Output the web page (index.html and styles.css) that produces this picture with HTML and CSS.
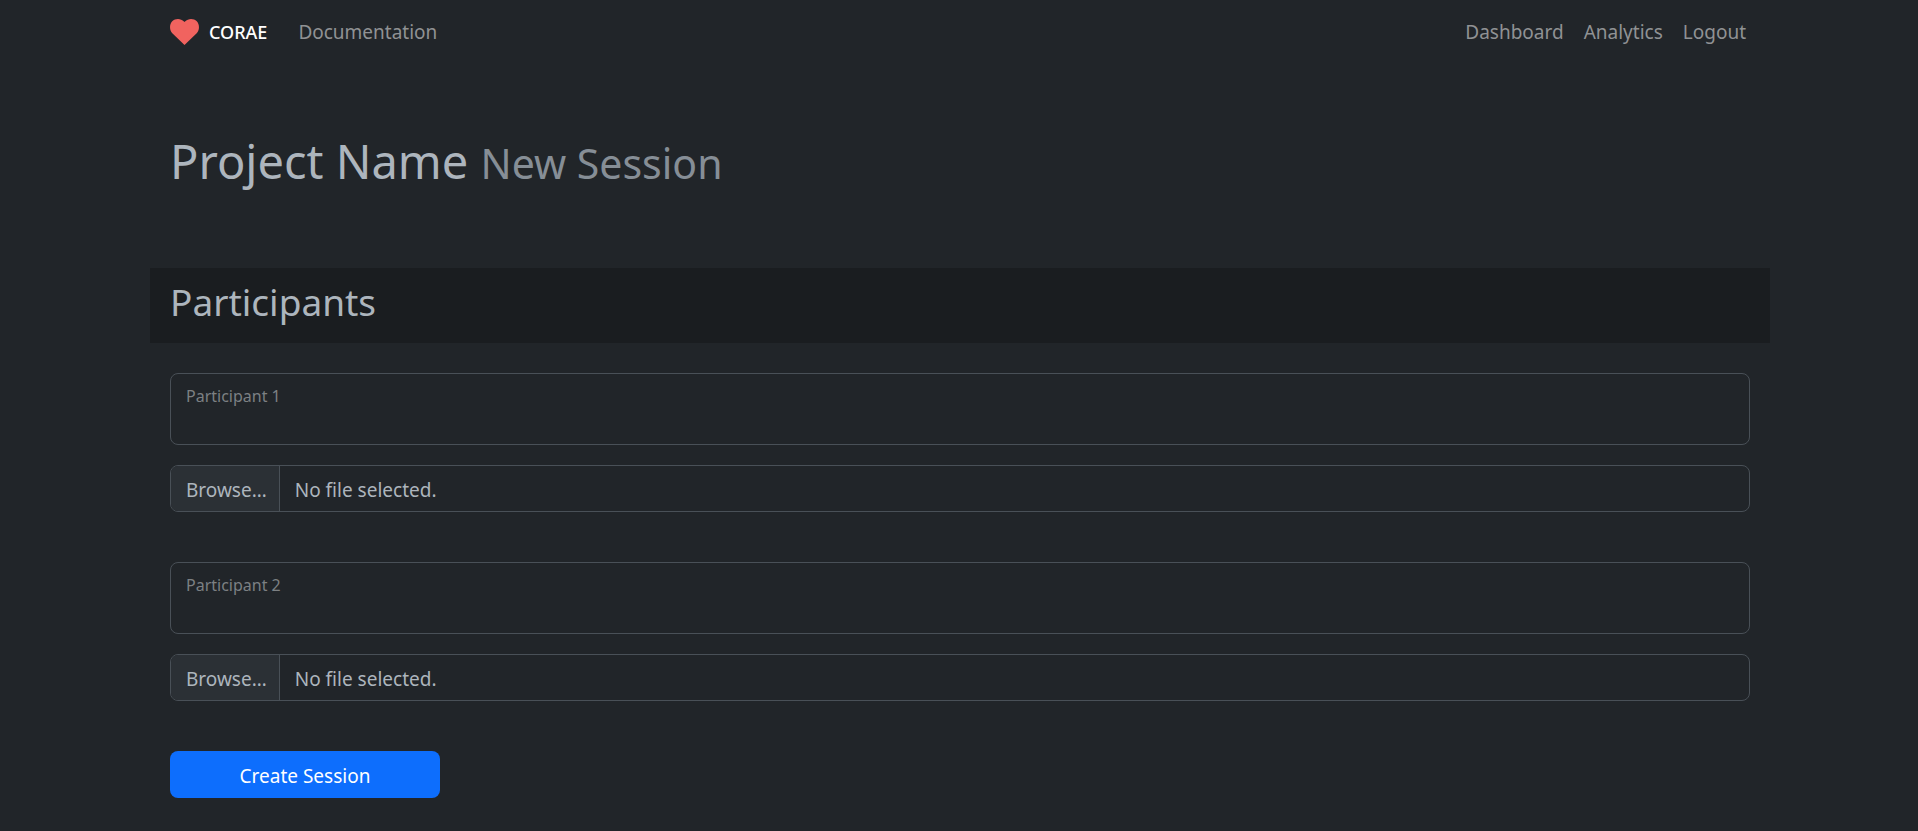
FILE: index.html
```html
<!DOCTYPE html>
<html lang="en">
<head>
<meta charset="utf-8">
<meta name="viewport" content="width=device-width, initial-scale=1">
<title>CORAE - New Session</title>
<link rel="stylesheet" href="styles.css">
</head>
<body>
<header class="navbar container">
  <a class="brand" href="#">
    <svg class="brand-icon" viewBox="0 0 29 26" aria-hidden="true"><path fill="#f1635f" d="M14.5 26 2.3 14.2C-.7 11.200-.7 5.200 2.200 2.300 5.400-.8 10.800-.8 14 2.600L14.500 3.100 15 2.600C18.200-.8 23.600-.8 26.800 2.300 29.700 5.200 29.700 11.200 26.700 14.200Z"/></svg>
    <span>CORAE</span>
  </a>
  <nav class="nav-links nav-main">
    <a class="nav-link" href="#">Documentation</a>
  </nav>
  <nav class="nav-links">
    <a class="nav-link" href="#">Dashboard</a>
    <a class="nav-link" href="#">Analytics</a>
    <a class="nav-link" href="#">Logout</a>
  </nav>
</header>
<main class="container">
  <h1 class="title">Project Name <small class="subtitle">New Session</small></h1>
  <h2 class="section-title">Participants</h2>
  <form class="form">
    <div class="participant">
      <div class="field">
        <label class="field-label" for="p1">Participant 1</label>
        <input class="field-input" id="p1" type="text">
      </div>
      <label class="file">
        <input class="file-input" type="file">
        <span class="file-button">Browse…</span>
        <span class="file-name">No file selected.</span>
      </label>
    </div>
    <div class="participant">
      <div class="field">
        <label class="field-label" for="p2">Participant 2</label>
        <input class="field-input" id="p2" type="text">
      </div>
      <label class="file">
        <input class="file-input" type="file">
        <span class="file-button">Browse…</span>
        <span class="file-name">No file selected.</span>
      </label>
    </div>
    <button class="submit" type="submit">Create Session</button>
  </form>
</main>
</body>
</html>
```
FILE: styles.css
```css
* {
  box-sizing: border-box;
}

body {
  margin: 0;
  padding-left: 2px;
  background: #212529;
  color: #adb5bd;
  font-family: "Segoe UI", "Noto Sans", sans-serif;
  font-size: 19px;
  line-height: 28px;
}

.container {
  max-width: 1620px;
  margin: 0 auto;
}

.navbar {
  display: flex;
  align-items: center;
  height: 64px;
  padding: 0 24px 0 20px;
}

.brand {
  display: flex;
  align-items: center;
  gap: 10px;
  margin-right: 31px;
  color: #fff;
  font-size: 18px;
  font-weight: 500;
  text-decoration: none;
}

.brand-icon {
  width: 29px;
  height: 26px;
}

.nav-links {
  display: flex;
  gap: 20px;
}

.nav-main {
  flex: 1;
}

.nav-link {
  color: #909294;
  text-decoration: none;
}

.title {
  margin: 0;
  padding: 65px 20px 73px;
  font-size: 47px;
  font-weight: 400;
  line-height: 64px;
}

.subtitle {
  color: #868e96;
  font-size: 41px;
  font-weight: 400;
}

.section-title {
  margin: 0 0 30px;
  padding: 10px 20px 17px;
  background: #1a1d20;
  font-size: 37px;
  font-weight: 400;
  line-height: 48px;
}

.form {
  padding: 0 20px 30px;
}

.participant {
  display: grid;
  gap: 20px;
  margin-bottom: 50px;
}

.field {
  display: flex;
  flex-direction: column;
  height: 72px;
  border: 1px solid #495057;
  border-radius: 8px;
}

.field:focus-within,
.file:focus-within {
  border-color: #86b7fe;
}

.field-label {
  padding: 10px 15px 0;
  color: #7c8083;
  font-size: 16px;
  line-height: 24px;
}

.field-input {
  flex: 1;
  min-height: 0;
  padding: 0 15px;
  border: 0;
  background: transparent;
  color: inherit;
  font: inherit;
  outline: 0;
}

.file {
  display: flex;
  height: 47px;
  overflow: hidden;
  border: 1px solid #495057;
  border-radius: 8px;
  line-height: 48px;
}

.file-input {
  width: 0;
  margin: 0;
  opacity: 0;
}

.file-button {
  padding: 0 12px 0 15px;
  border-right: 1px solid #495057;
  background: #2b3035;
}

.file-name {
  padding: 0 15px;
}

.submit {
  display: block;
  width: 270px;
  height: 47px;
  padding: 2px 0 0;
  border: 0;
  border-radius: 8px;
  background: #0d6efd;
  color: #fff;
  font: inherit;
}
```
